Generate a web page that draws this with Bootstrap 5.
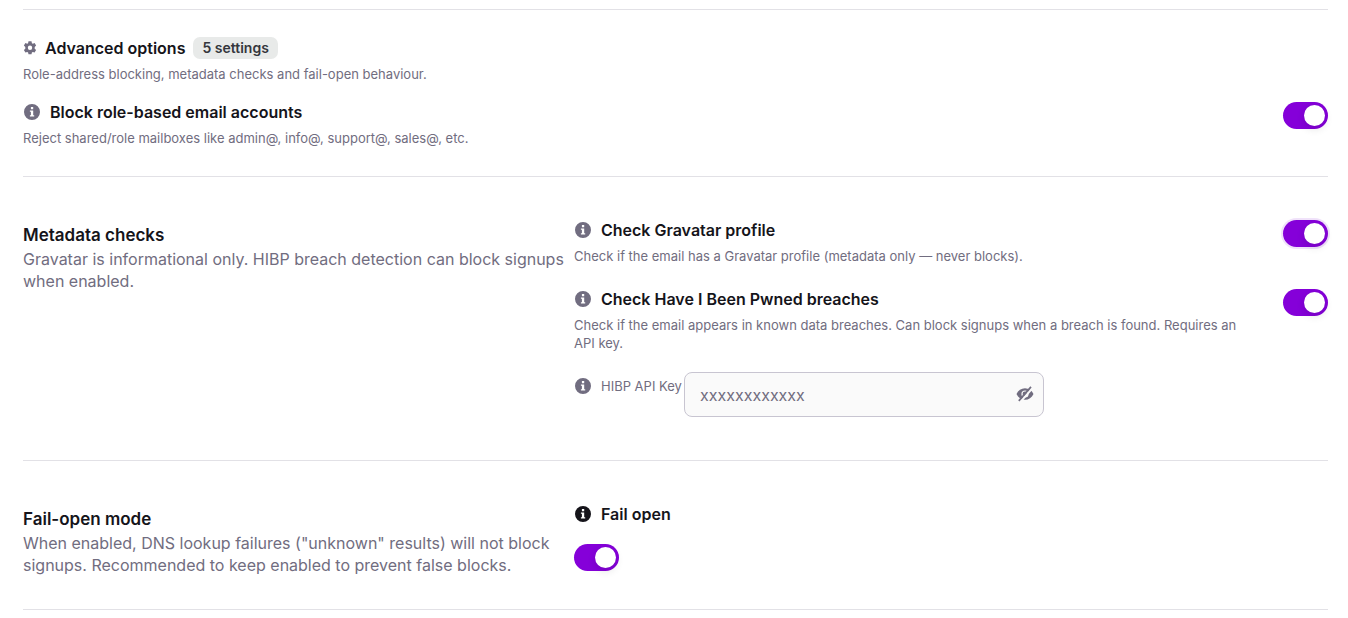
<!DOCTYPE html>
<html lang="en">
<head>
<meta charset="utf-8">
<meta name="viewport" content="width=device-width, initial-scale=1">
<title>Advanced options</title>
<link href="https://cdn.jsdelivr.net/npm/bootstrap@5.3.0/dist/css/bootstrap.min.css" rel="stylesheet">
<style>
body { font-family: Inter, "Liberation Sans", sans-serif; color: #15141a; background: #fff; }
.page { padding: 9px 20px 0 23px; }
.rule { border-top: 1px solid #e2e1e6; }
.muted { color: #716d80; }
.title { font-size: 16px; line-height: 20px; font-weight: 600; margin: 0; }
.section-title { font-size: 17px; line-height: 26px; font-weight: 600; margin: 0; }
.hint { font-size: 13px; line-height: 18px; margin: 0; color: #716d80; }
.title + .hint { margin-top: 7px; }
.with-icon { gap: 9px; }
.intro { font-size: 16px; line-height: 22px; margin: 0; color: #716d80; }
.advanced { padding: 27px 0 29px; }
.summary { margin: 6px 0 19px; }
.metadata { padding: 43px 0; }
.failopen { padding: 43px 0 33px; }
.side { width: 551px; padding: 2px 8px 0 0; }
.pill { font-size: 14px; line-height: 18px; font-weight: 600; padding: 2px 9px; border-radius: 7px; background: #e8eae9; color: #34373d; }
.info { width: 18px; height: 18px; flex: none; fill: currentColor; }
.gear { width: 14px; height: 14px; flex: none; fill: #716d80; }
.switch.form-check-input { width: 45px; height: 27px; margin: 0; border: 0; border-radius: 14px; padding: 3px; display: flex; flex: none; justify-content: flex-end; background: #8500d9; cursor: pointer; }
.switch:not(:checked) { background: #c9c7d1; justify-content: flex-start; }
.switch::before { content: ""; width: 21px; height: 21px; border-radius: 50%; background: #fff; box-shadow: 0 3px 8px rgba(0,0,0,.12); }
.switch.halo { box-shadow: 0 0 0 2px #f0e2fa; }
.key-row { margin-top: 20px; }
.key-row .hint { width: 110px; padding-top: 5px; }
.fail-label { margin-bottom: 20px; }
.key { width: 360px; }
.key input { height: 45px; font-size: 16px; line-height: 22px; padding: 0 44px 0 15px; color: #716d80; background: #fafafa; border: 1px solid #c8c5d1; border-radius: 8px; }
.key input::placeholder { color: #716d80; opacity: 1; }
.reveal { position: absolute; right: 9px; top: 12px; width: 20px; height: 20px; padding: 0; border: 0; display: flex; color: #716d80; }
</style>
</head>
<body>
<svg class="d-none" aria-hidden="true">
  <symbol id="info" viewBox="0 0 18 18"><path fill-rule="evenodd" d="M9 1a8 8 0 1 1 0 16A8 8 0 0 1 9 1ZM7.9 4.1v2.2h2.3V4.1H7.9ZM6.9 7.4v1.3h1v3.6h-1v1.3h4.3v-1.3h-1V7.4H6.9Z"/></symbol>
</svg>
<main class="page">
  <section class="rule advanced">
    <div class="d-flex align-items-center">
      <svg class="gear" viewBox="0 0 14 14" aria-hidden="true"><path fill-rule="evenodd" d="M5.500.3h3l.4 1.900.9.5 1.800-.6 1.500 2.500-1.400 1.300v1.800l1.400 1.300-1.500 2.500-1.800-.6-.9.5-.4 1.900h-3l-.4-1.900-.9-.5-1.800.6L.9 9l1.400-1.300V5.900L.9 4.600l1.500-2.500 1.800.6.9-.5ZM7 4.600a2.200 2.200 0 1 0 0 4.400 2.200 2.200 0 0 0 0-4.400Z"/></svg>
      <h2 class="title ms-2">Advanced options</h2>
      <span class="pill ms-2">5 settings</span>
    </div>
    <p class="hint summary">Role-address blocking, metadata checks and fail-open behaviour.</p>
    <div class="d-flex justify-content-between align-items-start">
      <div>
        <label class="title d-flex align-items-center with-icon" for="role"><svg class="info muted" aria-hidden="true"><use href="#info"/></svg>Block role-based email accounts</label>
        <p class="hint">Reject shared/role mailboxes like admin@, info@, support@, sales@, etc.</p>
      </div>
      <input class="form-check-input switch" type="checkbox" role="switch" id="role" checked>
    </div>
  </section>

  <section class="rule metadata d-flex">
    <div class="side flex-shrink-0">
      <h2 class="section-title">Metadata checks</h2>
      <p class="intro">Gravatar is informational only. HIBP breach detection can block signups when enabled.</p>
    </div>
    <div class="flex-grow-1">
      <div class="d-flex justify-content-between">
        <div>
          <label class="title d-flex align-items-center with-icon" for="gravatar"><svg class="info muted" aria-hidden="true"><use href="#info"/></svg>Check Gravatar profile</label>
          <p class="hint">Check if the email has a Gravatar profile (metadata only — never blocks).</p>
        </div>
        <input class="form-check-input switch halo" type="checkbox" role="switch" id="gravatar" checked>
      </div>
      <div class="d-flex justify-content-between gap-4 mt-4">
        <div>
          <label class="title d-flex align-items-center with-icon" for="pwned"><svg class="info muted" aria-hidden="true"><use href="#info"/></svg>Check Have I Been Pwned breaches</label>
          <p class="hint">Check if the email appears in known data breaches. Can block signups when a breach is found. Requires an API&nbsp;key.</p>
        </div>
        <input class="form-check-input switch" type="checkbox" role="switch" id="pwned" checked>
      </div>
      <div class="d-flex align-items-start key-row">
        <label class="hint d-flex align-items-center with-icon text-nowrap" for="apikey"><svg class="info" aria-hidden="true"><use href="#info"/></svg>HIBP API Key</label>
        <div class="key position-relative">
          <input class="form-control" type="text" id="apikey" placeholder="xxxxxxxxxxxx">
          <button class="btn reveal" type="button" aria-label="Show key"><svg width="20" height="20" viewBox="0 0 20 20" fill="none" aria-hidden="true"><path fill="currentColor" fill-rule="evenodd" d="M1.500 10C3.200 6.300 6.300 4.200 10 4.200s6.800 2.100 8.500 5.800c-1.700 3.700-4.800 5.800-8.500 5.800S3.200 13.700 1.500 10ZM10 6.400a3.600 3.600 0 1 0 0 7.200 3.600 3.600 0 0 0 0-7.200Z"/><circle cx="10" cy="10" r="2.400" fill="currentColor"/><path stroke="#fafafa" stroke-width="2" d="M5.300 18l12.200-14"/><path stroke="currentColor" stroke-width="1.700" d="M3.800 16.900L16 2.900"/></svg></button>
        </div>
      </div>
    </div>
  </section>

  <section class="rule failopen d-flex">
    <div class="side flex-shrink-0">
      <h2 class="section-title">Fail-open mode</h2>
      <p class="intro">When enabled, DNS lookup failures ("unknown" results) will not block signups. Recommended to keep enabled to prevent false blocks.</p>
    </div>
    <div class="flex-grow-1">
      <label class="title d-flex align-items-center with-icon fail-label" for="failopen"><svg class="info" aria-hidden="true"><use href="#info"/></svg>Fail open</label>
      <input class="form-check-input switch" type="checkbox" role="switch" id="failopen" checked>
    </div>
  </section>
  <div class="rule"></div>
</main>
<script src="https://cdn.jsdelivr.net/npm/bootstrap@5.3.0/dist/js/bootstrap.bundle.min.js"></script>
</body>
</html>
